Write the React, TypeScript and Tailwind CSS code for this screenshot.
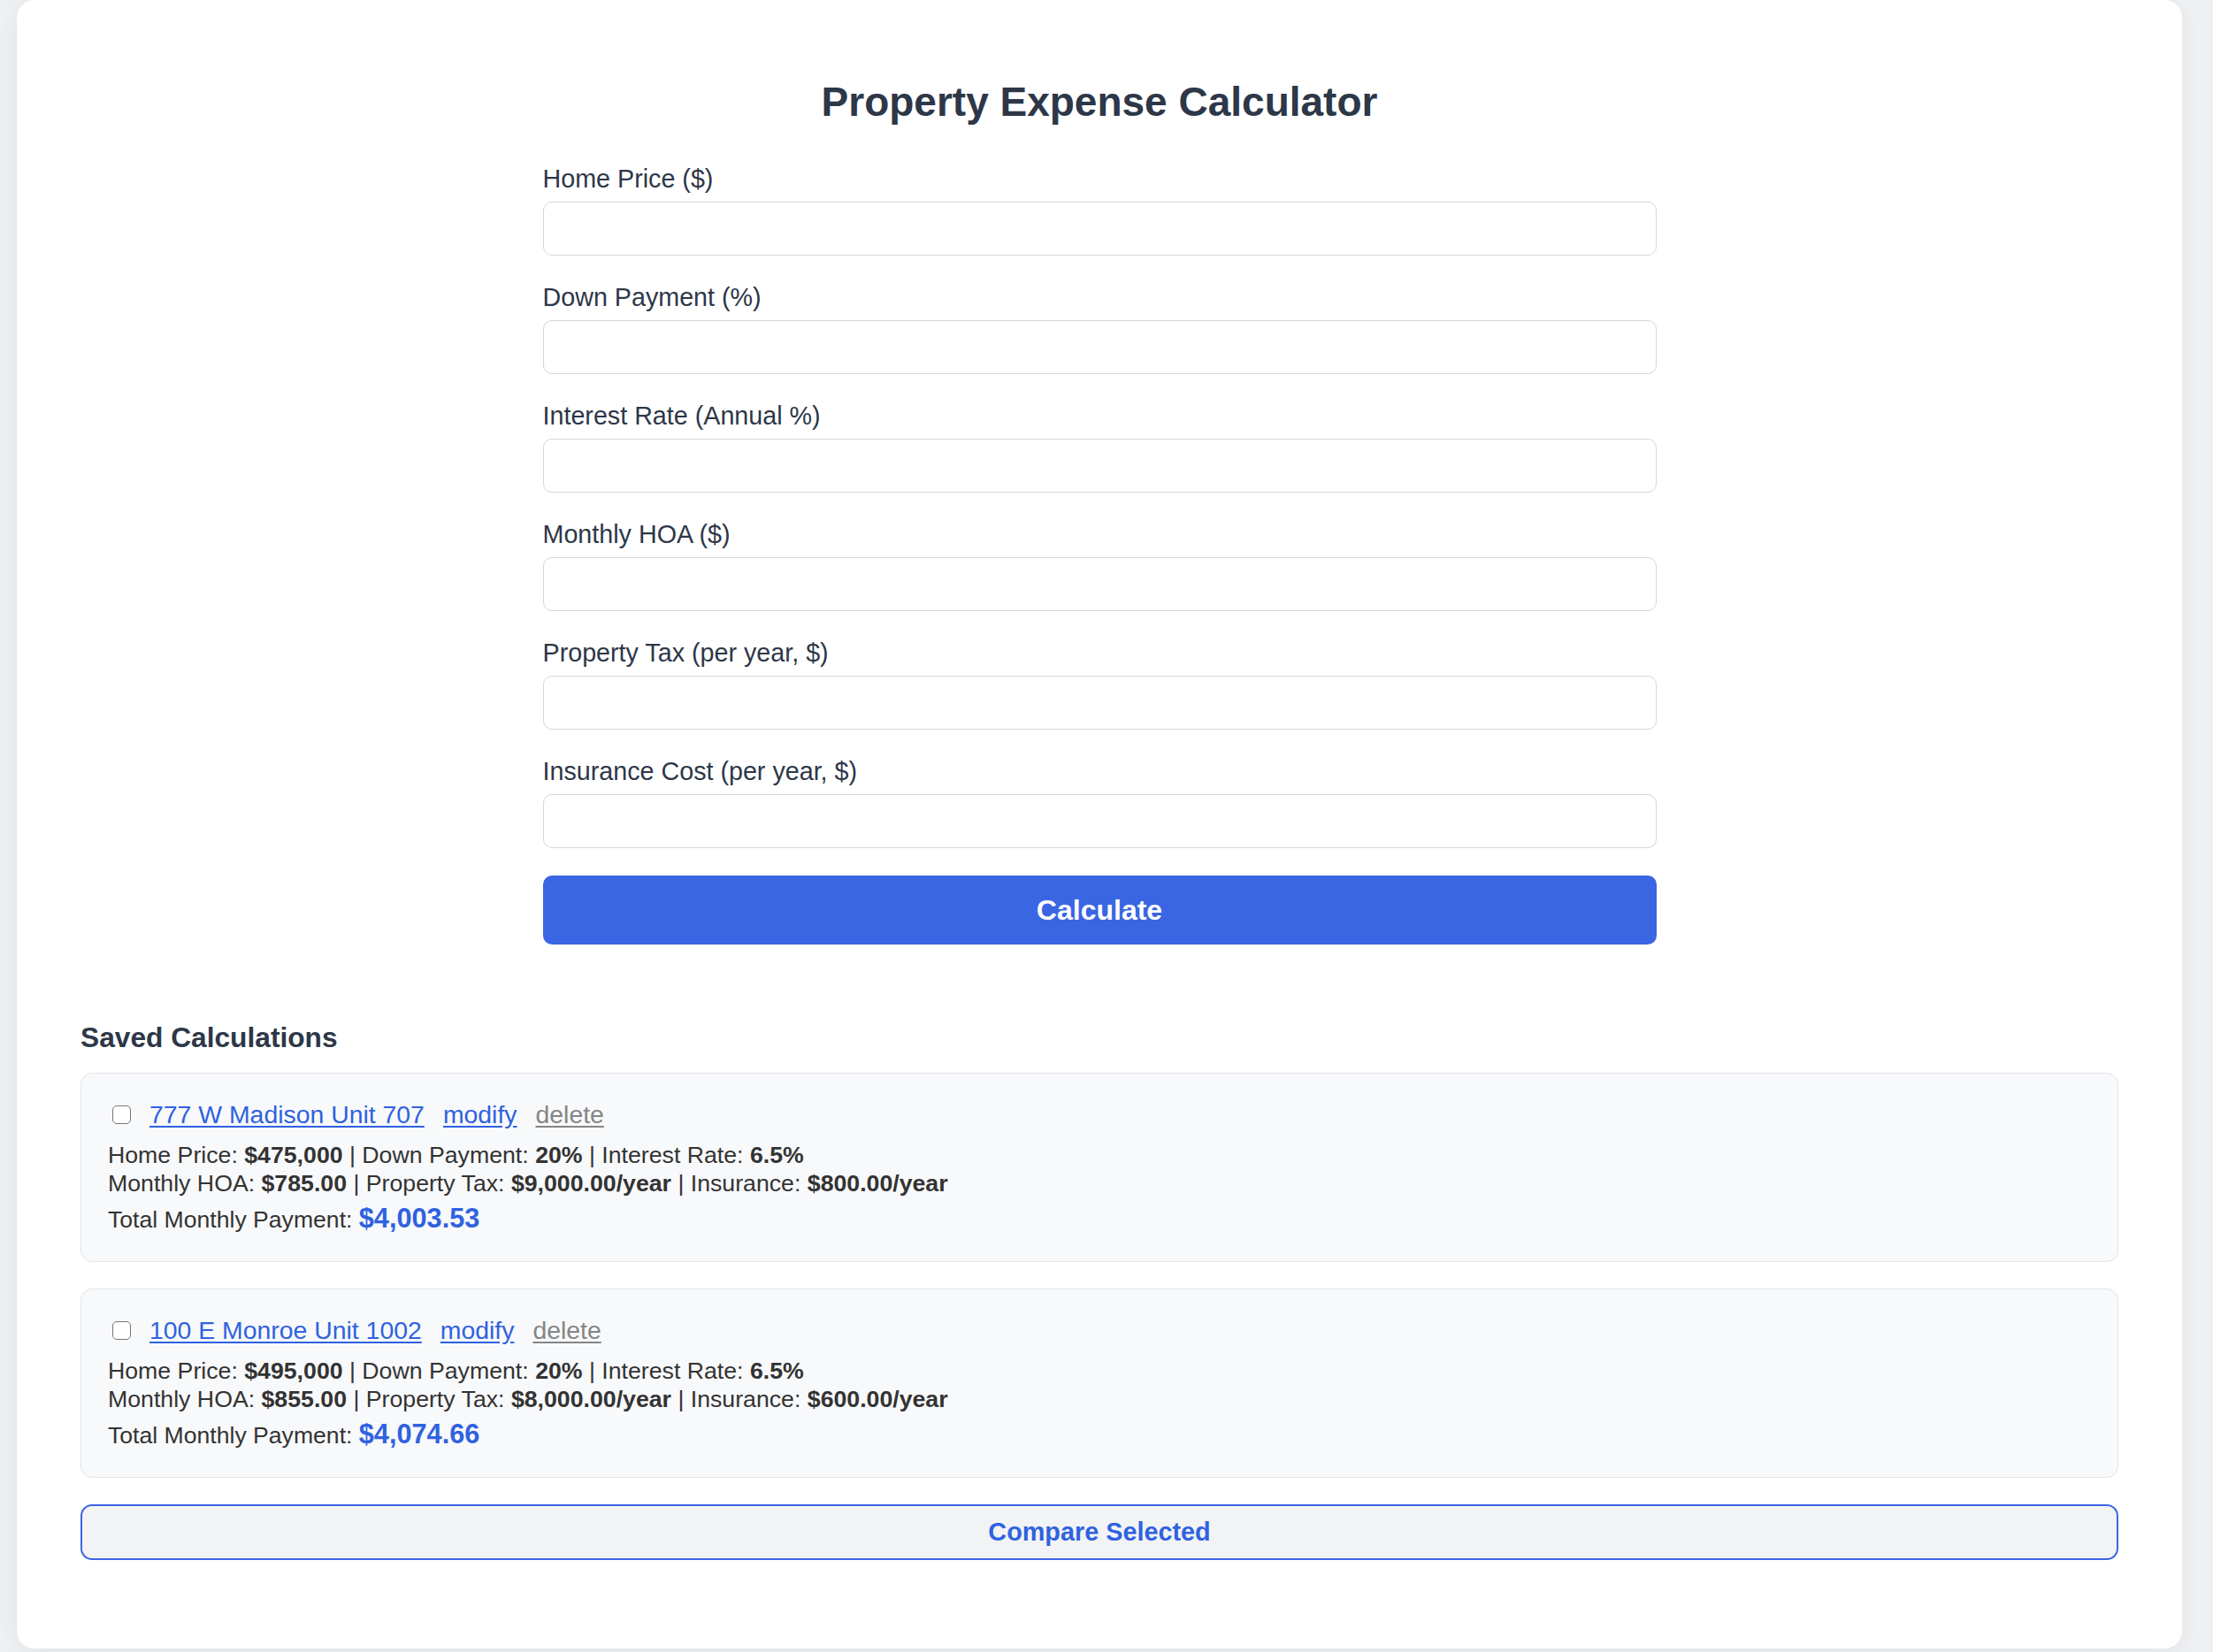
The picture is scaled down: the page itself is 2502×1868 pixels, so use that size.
const FIELDS = [
  "Home Price ($)",
  "Down Payment (%)",
  "Interest Rate (Annual %)",
  "Monthly HOA ($)",
  "Property Tax (per year, $)",
  "Insurance Cost (per year, $)",
];

const SAVED = [
  {
    name: "777 W Madison Unit 707",
    price: "$475,000",
    down: "20%",
    rate: "6.5%",
    hoa: "$785.00",
    tax: "$9,000.00/year",
    insurance: "$800.00/year",
    total: "$4,003.53",
  },
  {
    name: "100 E Monroe Unit 1002",
    price: "$495,000",
    down: "20%",
    rate: "6.5%",
    hoa: "$855.00",
    tax: "$8,000.00/year",
    insurance: "$600.00/year",
    total: "$4,074.66",
  },
];

export default function App() {
  return (
    <div className="h-[1868px] w-full overflow-hidden bg-[#eff0f2] font-['Liberation_Sans',Arial,sans-serif]">
      <div className="ml-[19px] h-[1864px] w-[2448px] rounded-[20px] bg-white pt-[89px] shadow-[0_4px_24px_rgba(0,0,0,0.06)]">
        <h1 className="text-center text-[46px] font-bold leading-[53px] text-[#2d3748]">
          Property Expense Calculator
        </h1>

        <form className="mx-auto mt-[44px] w-[1259px]" onSubmit={(e) => e.preventDefault()}>
          {FIELDS.map((label) => (
            <div key={label} className="mb-[31px]">
              <label className="block text-[28.7px] leading-[32px] text-[#2d3748]">{label}</label>
              <input
                type="text"
                className="mt-[10px] block h-[61px] w-full rounded-[10px] border border-[#d6d6d9] bg-white px-4 text-[26px] outline-none"
              />
            </div>
          ))}
          <button
            type="submit"
            className="block h-[78px] w-full rounded-[10px] bg-[#3a65e3] text-[32px] font-bold text-white"
          >
            Calculate
          </button>
        </form>

        <div className="mt-[88px] px-[72px]">
          <h2 className="text-[31.7px] font-bold leading-[35px] text-[#2d3748]">Saved Calculations</h2>

          <ul className="mt-[22px] space-y-[30px]">
            {SAVED.map((s) => (
              <li
                key={s.name}
                className="rounded-[13px] border border-[#e3e5e9] bg-[#f8f9fb] px-[30px] pb-[30px] pt-[30px] text-[#333]"
              >
                <div className="flex items-center gap-[21px] text-[28.4px] leading-[32px]">
                  <span className="ml-[5px] block h-[21px] w-[21px] rounded-[5px] border-[1.5px] border-[#767676] bg-white" />
                  <a href="#" className="text-[#2f62e0] underline underline-offset-[3px]">
                    {s.name}
                  </a>
                  <a href="#" className="text-[#2f62e0] underline underline-offset-[3px]">
                    modify
                  </a>
                  <a href="#" className="text-[#858585] underline underline-offset-[3px]">
                    delete
                  </a>
                </div>
                <p className="mt-[14px] text-[26.7px] leading-[32px]">
                  Home Price: <b>{s.price}</b> | Down Payment: <b>{s.down}</b> | Interest Rate:{" "}
                  <b>{s.rate}</b>
                  <br />
                  Monthly HOA: <b>{s.hoa}</b> | Property Tax: <b>{s.tax}</b> | Insurance:{" "}
                  <b>{s.insurance}</b>
                </p>
                <p className="mt-[7px] text-[26.6px] leading-[34px]">
                  Total Monthly Payment:{" "}
                  <span className="text-[30.7px] font-bold text-[#2f62e0]">{s.total}</span>
                </p>
              </li>
            ))}
          </ul>

          <button
            type="button"
            className="mt-[30px] block h-[63px] w-full rounded-[13px] border-2 border-[#3a65e3] bg-[#f2f3f5] text-[28.8px] font-bold text-[#2f62e0]"
          >
            Compare Selected
          </button>
        </div>
      </div>
    </div>
  );
}
